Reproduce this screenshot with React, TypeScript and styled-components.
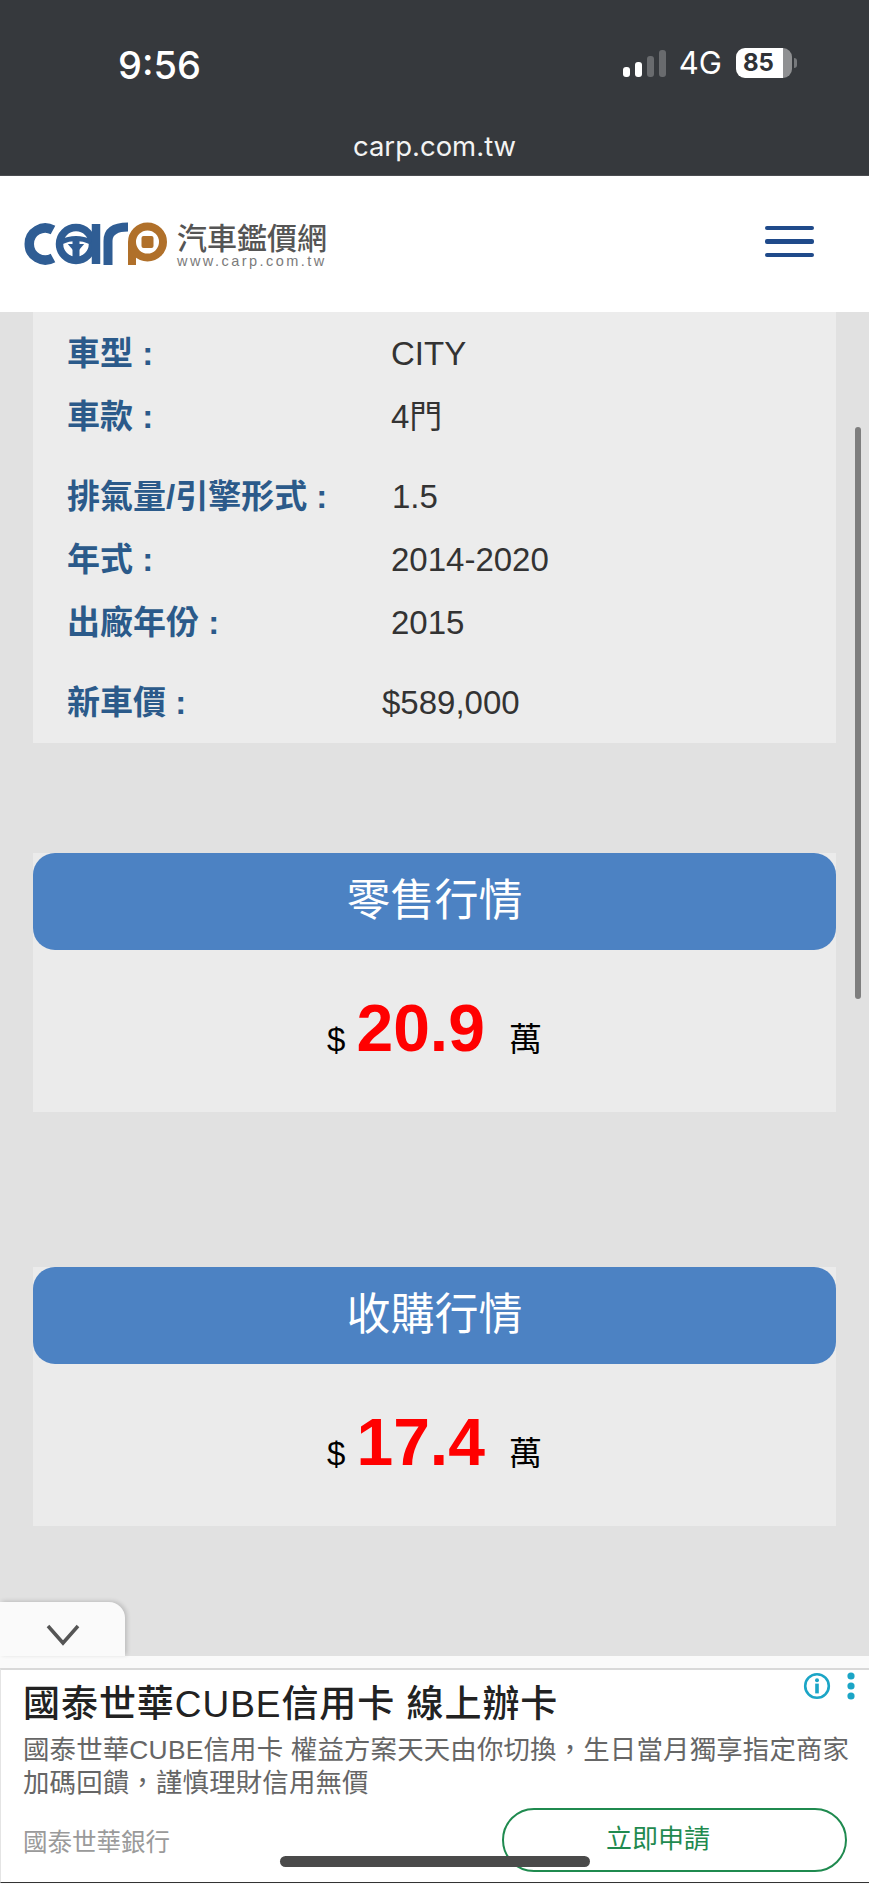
import React from "react";
import styled, { createGlobalStyle } from "styled-components";

const SANS = `"Liberation Sans", "Noto Sans CJK TC", sans-serif`;

const Global = createGlobalStyle`
  html, body { margin: 0; padding: 0; background: #e0e0e0; }
  * { box-sizing: border-box; }
  body { font-family: ${SANS}; }
`;

const Page = styled.div`
  position: relative;
  width: 869px;
  height: 1884px;
  display: flex;
  flex-direction: column;
  overflow: hidden;
  background: #e1e1e1;
`;

const BrowserBar = styled.div`
  height: 176px;
  flex: none;
  background: #36393d;
  border-bottom: 1px solid #4a4c50;
  color: #fff;
  display: flex;
  flex-direction: column;
`;
const StatusRow = styled.div`
  height: 128px;
  padding: 46px 77px 0 118px;
  display: flex;
  justify-content: space-between;
  align-items: flex-start;
`;
const Clock = styled.div`
  font-family: Inter, sans-serif;
  font-weight: 500;
  font-size: 38px;
  line-height: 38px;
`;
const StatusRight = styled.div`
  display: flex;
  align-items: flex-end;
  height: 34px;
  margin-top: -1px;
  padding-bottom: 1px;
`;
const Signal = styled.div`
  display: flex;
  align-items: flex-end;
  gap: 5px;
  margin-right: 13px;
  margin-bottom: 1px;
`;
const SignalBar = styled.span<{ $h: number; $on?: boolean }>`
  display: block;
  width: 7px;
  height: ${(p) => p.$h}px;
  border-radius: 3px;
  background: ${(p) => (p.$on ? "#fff" : "#696b6e")};
`;
const Net = styled.div`
  font-family: Inter, sans-serif;
  font-size: 31px;
  line-height: 30px;
  margin-right: 14px;
`;
const Battery = styled.div`
  position: relative;
  width: 56px;
  height: 30px;
  border-radius: 9px;
  background: linear-gradient(90deg, #fff 0 84%, #8f9092 84% 100%);
  color: #2f3236;
  font-family: Inter, sans-serif;
  font-size: 24px;
  font-weight: 700;
  line-height: 30px;
  padding-left: 7px;
  &::after {
    content: "";
    position: absolute;
    right: -5px;
    top: 10px;
    width: 3px;
    height: 10px;
    border-radius: 0 3px 3px 0;
    background: #77797c;
  }
`;
const Url = styled.div`
  text-align: center;
  font-family: Inter, sans-serif;
  font-size: 27.5px;
  line-height: 36px;
  color: #f3f3f3;
`;

const SiteHeader = styled.header`
  height: 136px;
  flex: none;
  background: #fff;
  display: flex;
  align-items: center;
  justify-content: space-between;
  padding: 0 55px 0 24px;
`;
const Logo = styled.div`
  display: flex;
  align-items: center;
  gap: 7px;
`;
const LogoWords = styled.div`
  display: flex;
  flex-direction: column;
  align-items: flex-start;
  padding-top: 4px;
`;
const LogoName = styled.div`
  font-size: 30px;
  line-height: 31px;
  font-weight: 500;
  color: #555;
  white-space: nowrap;
`;
const LogoUrl = styled.div`
  font-size: 14.5px;
  line-height: 15px;
  letter-spacing: 2.45px;
  color: #7b7b7b;
  white-space: nowrap;
`;
const Burger = styled.div`
  width: 49px;
  display: flex;
  flex-direction: column;
  gap: 9px;
  margin-bottom: 5px;
`;
const BurgerBar = styled.span`
  display: block;
  height: 4.5px;
  border-radius: 2px;
  background: #1f4a8a;
`;

const Main = styled.main`
  position: relative;
  flex: 1;
  padding: 0 33px;
`;
const InfoCard = styled.section`
  background: #ececec;
  padding: 10px 0 9px 34px;
  display: flex;
  flex-direction: column;
  gap: 17px;
  margin-bottom: 110px;
`;
const RowGroup = styled.div`
  display: flex;
  flex-direction: column;
`;
const Row = styled.div`
  display: grid;
  grid-template-columns: 324px 1fr;
  height: 63px;
  align-items: center;
`;
const Label = styled.div`
  font-size: 33px;
  line-height: 40px;
  font-weight: 700;
  color: #2b5a8a;
  white-space: nowrap;
  padding-top: 1px;
`;
const Val = styled.div<{ $nudge?: number }>`
  font-size: 33px;
  line-height: 40px;
  color: #333;
  margin-left: ${(p) => p.$nudge ?? 0}px;
`;

const QuoteCard = styled.section<{ $gap: number }>`
  background: #ebebeb;
  margin-bottom: ${(p) => p.$gap}px;
`;
const QuoteTitle = styled.h2`
  margin: 0;
  height: 97px;
  border-radius: 22px;
  background: #4c82c3;
  color: #fff;
  font-size: 44px;
  font-weight: 400;
  text-align: center;
  line-height: 96px;
`;
const QuoteBody = styled.div`
  height: 162px;
  padding-top: 41px;
  display: flex;
  justify-content: center;
  align-items: baseline;
  color: #000;
  font-size: 33px;
`;
const Amount = styled.span`
  color: #f00;
  font-size: 66px;
  font-weight: 700;
  margin: 0 24px 0 11px;
  line-height: 74px;
`;

const ScrollThumb = styled.div`
  position: absolute;
  right: 8px;
  top: 115px;
  width: 6px;
  height: 572px;
  border-radius: 3px;
  background: #7e7e7e;
`;

const Dock = styled.div`
  position: relative;
  flex: none;
  height: 228px;
  background: #fafafa;
  padding-top: 12px;
`;
const CollapseTab = styled.div`
  position: absolute;
  left: 0;
  top: -54px;
  width: 125px;
  height: 54px;
  padding-top: 12px;
  background: #fafafa;
  border-radius: 0 16px 0 0;
  box-shadow: 2px -1px 4px rgba(0, 0, 0, 0.16);
  display: flex;
  align-items: center;
  justify-content: center;
`;
const Ad = styled.aside`
  position: relative;
  height: 215px;
  background: #fff;
  border-top: 2px solid #d9d9d9;
  border-left: 1px solid #e4e4e4;
  border-bottom: 1px solid #333;
  padding: 9px 20px 0 22px;
`;
const AdTitle = styled.div`
  font-size: 37px;
  line-height: 52px;
  font-weight: 500;
  color: #222;
  white-space: nowrap;
  letter-spacing: 0.95px;
`;
const AdText = styled.div`
  margin-top: 3px;
  font-size: 26.4px;
  line-height: 33px;
  letter-spacing: 0.2px;
  color: #666;
  white-space: nowrap;
`;
const AdFoot = styled.div`
  margin-top: 8px;
  padding-right: 2px;
  display: flex;
  justify-content: space-between;
  align-items: center;
`;
const Advertiser = styled.div`
  font-size: 24.5px;
  color: #9a9a9a;
  margin-top: 1px;
`;
const ApplyButton = styled.div`
  width: 345px;
  height: 64px;
  border: 2.5px solid #1f8a4f;
  border-radius: 32px;
  color: #1f8a4f;
  font-size: 26px;
  font-weight: 400;
  text-align: center;
  line-height: 59px;
  padding-right: 33px;
`;
const AdIcons = styled.div`
  position: absolute;
  right: 14px;
  top: 2px;
  display: flex;
  align-items: center;
  gap: 16px;
`;
const HomeBar = styled.div`
  position: absolute;
  left: 280px;
  bottom: 17px;
  width: 310px;
  height: 11px;
  border-radius: 6px;
  background: #4a4a4a;
`;

const LogoMark = () => (
  <svg width="146" height="46" viewBox="0 0 146 46" fill="none">
    <g stroke="#2f5d94">
      <path d="M29 9 A16 16 0 1 0 29 37" strokeWidth="9.5" />
      <circle cx="52" cy="23" r="16.5" strokeWidth="7.5" />
      <path d="M72 3 V43" strokeWidth="8.5" />
      <path d="M37 21 Q52 14 67 21" strokeWidth="5" />
      <path d="M52 20 V38" strokeWidth="7" />
      <path d="M46 24 L52 31 L58 24 Z" fill="#2f5d94" strokeWidth="2" />
      <path d="M84 44 V20 Q84 6 104 6" strokeWidth="9" />
    </g>
    <path d="M108 44 V21" stroke="#b0702a" strokeWidth="8" />
    <circle cx="123.5" cy="21" r="15.5" stroke="#b0702a" strokeWidth="8" />
    <rect x="117.5" y="15" width="12" height="12" rx="2" fill="#b0702a" />
  </svg>
);

const ChevronDown = () => (
  <svg width="34" height="22" viewBox="0 0 34 22" fill="none">
    <path d="M2 2 L17 19 L32 2" stroke="#555" strokeWidth="3.5" />
  </svg>
);

const AdInfoIcons = () => (
  <>
    <svg width="28" height="28" viewBox="0 0 28 28" fill="none">
      <circle cx="14" cy="14" r="11.8" stroke="#1ba5c6" strokeWidth="2.6" />
      <circle cx="14" cy="8.2" r="2" fill="#1ba5c6" />
      <rect x="12.2" y="11.6" width="3.6" height="9.8" fill="#1ba5c6" />
    </svg>
    <svg width="8" height="28" viewBox="0 0 8 28" fill="#1ba5c6">
      <circle cx="4" cy="4" r="3.6" />
      <circle cx="4" cy="14" r="3.6" />
      <circle cx="4" cy="24" r="3.6" />
    </svg>
  </>
);

const groups: { label: string; value: string; nudge?: number }[][] = [
  [
    { label: "車型 :", value: "CITY" },
    { label: "車款 :", value: "4門" },
  ],
  [
    { label: "排氣量/引擎形式 :", value: "1.5", nudge: 1 },
    { label: "年式 :", value: "2014-2020" },
    { label: "出廠年份 :", value: "2015" },
  ],
  [{ label: "新車價 :", value: "$589,000", nudge: -9 }],
];

const quotes = [
  { title: "零售行情", amount: "20.9", gap: 155 },
  { title: "收購行情", amount: "17.4", gap: 0 },
];

export default function App() {
  return (
    <Page>
      <Global />
      <BrowserBar>
        <StatusRow>
          <Clock>9:56</Clock>
          <StatusRight>
            <Signal>
              <SignalBar $h={10} $on />
              <SignalBar $h={15} $on />
              <SignalBar $h={21} />
              <SignalBar $h={27} />
            </Signal>
            <Net>4G</Net>
            <Battery>85</Battery>
          </StatusRight>
        </StatusRow>
        <Url>carp.com.tw</Url>
      </BrowserBar>
      <SiteHeader>
        <Logo>
          <LogoMark />
          <LogoWords>
            <LogoName>汽車鑑價網</LogoName>
            <LogoUrl>www.carp.com.tw</LogoUrl>
          </LogoWords>
        </Logo>
        <Burger>
          <BurgerBar />
          <BurgerBar />
          <BurgerBar />
        </Burger>
      </SiteHeader>
      <Main>
        <InfoCard>
          {groups.map((group, i) => (
            <RowGroup key={i}>
              {group.map((row) => (
                <Row key={row.label}>
                  <Label>{row.label}</Label>
                  <Val $nudge={row.nudge}>{row.value}</Val>
                </Row>
              ))}
            </RowGroup>
          ))}
        </InfoCard>
        {quotes.map((q) => (
          <QuoteCard key={q.title} $gap={q.gap}>
            <QuoteTitle>{q.title}</QuoteTitle>
            <QuoteBody>
              $<Amount>{q.amount}</Amount>萬
            </QuoteBody>
          </QuoteCard>
        ))}
        <ScrollThumb />
      </Main>
      <Dock>
        <CollapseTab>
          <ChevronDown />
        </CollapseTab>
        <Ad>
          <AdIcons>
            <AdInfoIcons />
          </AdIcons>
          <AdTitle>國泰世華CUBE信用卡 線上辦卡</AdTitle>
          <AdText>
            國泰世華CUBE信用卡 權益方案天天由你切換，生日當月獨享指定商家
            <br />
            加碼回饋，謹慎理財信用無價
          </AdText>
          <AdFoot>
            <Advertiser>國泰世華銀行</Advertiser>
            <ApplyButton>立即申請</ApplyButton>
          </AdFoot>
        </Ad>
        <HomeBar />
      </Dock>
    </Page>
  );
}
